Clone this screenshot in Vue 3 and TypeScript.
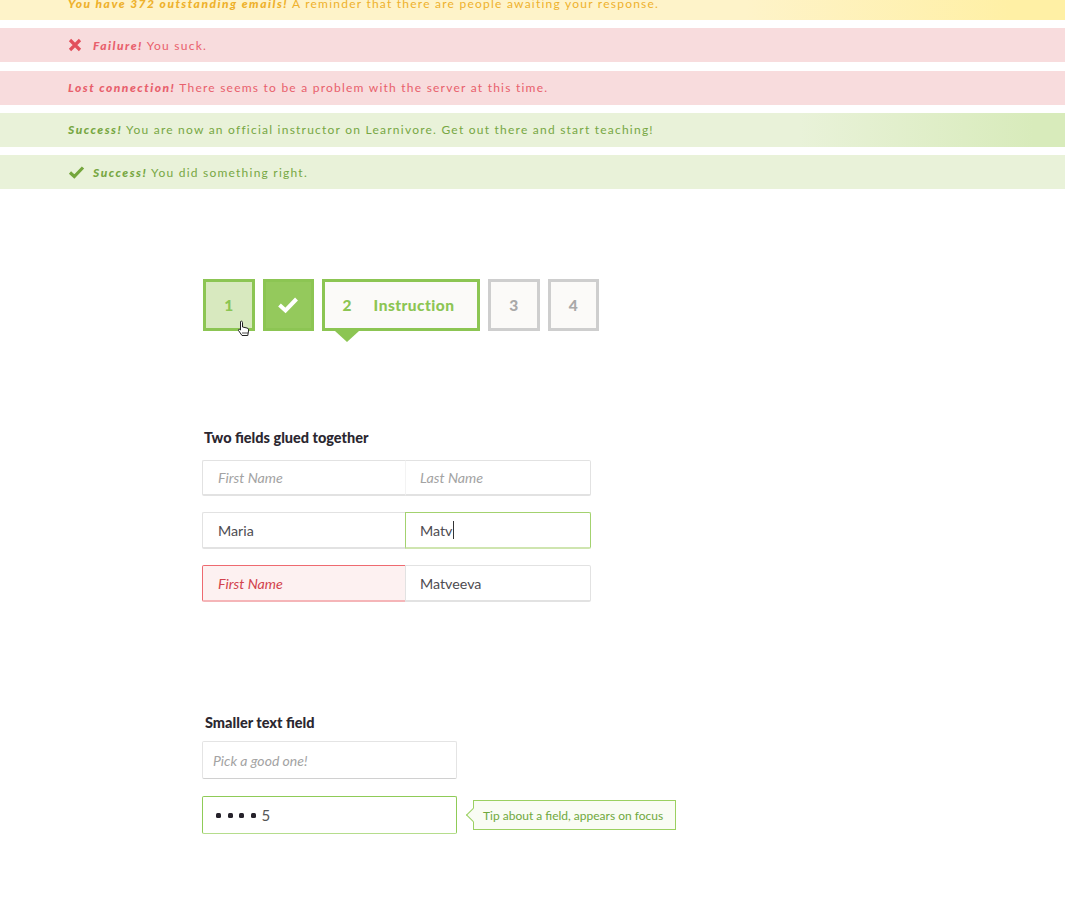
<script setup lang="ts">
const placeholder = 'First Name'
</script>

<template>
  <div class="page">
    <div class="alerts">
      <div class="alert yellow first"><span><b>You have 372 outstanding emails!</b> A reminder that there are people awaiting your response.</span></div>
      <div class="alert red">
        <svg class="ico" width="14" height="14" viewBox="0 0 14 14"><path d="M2 2 L12 12 M12 2 L2 12" stroke="#e2505c" stroke-width="3.2" fill="none"/></svg>
        <span><b>Failure!</b> You suck.</span>
      </div>
      <div class="alert red"><span><b>Lost connection!</b> There seems to be a problem with the server at this time.</span></div>
      <div class="alert green grad"><span><b>Success!</b> You are now an official instructor on Learnivore. Get out there and start teaching!</span></div>
      <div class="alert green">
        <svg class="ico check" width="17" height="14" viewBox="0 0 17 14"><path d="M2 7.5 L6.3 11.5 L15 2.5" stroke="#74a63c" stroke-width="3.2" fill="none"/></svg>
        <span><b>Success!</b> You did something right.</span>
      </div>
    </div>

    <div class="steps">
      <div class="step hover">1
        <svg class="cursor" width="13" height="17" viewBox="0 0 13 17"><path d="M3.5 1.5 C4.5 .8 5.5 1.2 5.5 2.5 V7 L10 8 C11.5 8.4 11.8 9.5 11.5 11 L10.8 15.5 H5 L1.5 10.5 C1 9.5 2 8.8 3.5 10 Z" fill="#fff" stroke="#222" stroke-width="1"/><path d="M6 12v2M8 12v2M10 12v2" stroke="#222" stroke-width=".8"/></svg>
      </div>
      <div class="step done">
        <svg width="22" height="18" viewBox="0 0 22 18"><path d="M2.5 9 L8.5 14.5 L19.5 3" stroke="#fff" stroke-width="4" fill="none"/></svg>
      </div>
      <div class="step current"><span class="num">2</span><span class="name">Instruction</span></div>
      <div class="step todo">3</div>
      <div class="step todo">4</div>
    </div>

    <section class="glued">
      <h3>Two fields glued together</h3>
      <div class="pair short">
        <div class="cell left ph">{{ placeholder }}</div>
        <div class="cell right ph blank">Last Name</div>
      </div>
      <div class="pair">
        <div class="cell left">Maria</div>
        <div class="cell right focus">Matv<i class="caret"></i></div>
      </div>
      <div class="pair">
        <div class="cell left error">{{ placeholder }}</div>
        <div class="cell right">Matveeva</div>
      </div>
    </section>

    <section class="smaller">
      <h3>Smaller text field</h3>
      <div class="small-field ph">Pick a good one!</div>
      <div class="small-row">
        <div class="small-field active"><span class="dots"><i></i><i></i><i></i><i></i></span>5</div>
        <div class="tip">Tip about a field, appears on focus</div>
      </div>
    </section>
  </div>
</template>

<style scoped>
.page { width: 1065px; height: 900px; overflow: hidden; background: #fff; font-family: Lato, "Liberation Sans", sans-serif; color: #3c3a40; }
.alerts { display: flex; flex-direction: column; gap: 8.33px; margin-top: -14px; }
.alert { height: 34px; display: flex; align-items: center; gap: 11px; padding-left: 68px; font-size: 12px; letter-spacing: 1.23px; white-space: pre-wrap; }
.alert b { font-style: italic; font-weight: 900; letter-spacing: 1.5px; }
.first { background: linear-gradient(90deg, #fef3c9 0%, #fef3c9 70%, #fff0a5 95%, #fff0a5 100%); color: #eeb12c; }
.red { background: #f8dcdd; color: #e8606c; }
.green { background: #e9f2d9; color: #77a743; }
.grad { background: linear-gradient(90deg, #e9f2d9 0%, #e9f2d9 75%, #d8ebbb 97%); }
.ico { flex: none; }
.check { margin-right: -3px; }
.steps { display: flex; gap: 8px; margin: 90px 0 0 203px; height: 52px; }
.step { position: relative; box-sizing: border-box; width: 51.5px; height: 52px; border: 3px solid #8cc553; display: flex; align-items: center; justify-content: center; font-size: 15.5px; font-weight: 900; color: #8cc553; }
.hover { background: #d8e9bf; }
.done { background: #94c95c; }
.current { width: 158px; background: #fbfaf8; gap: 22px; padding-right: 5px; }
.name { letter-spacing: 0.45px; }
.current::after { content: ""; position: absolute; left: 10px; top: 49px; border: 12px solid transparent; border-top: 11px solid #8cc553; border-bottom: 0; }
.todo { border-color: #cecece; color: #a9a9a9; background: #fbfaf8; }
.cursor { position: absolute; left: 31px; top: 38px; }
.glued { margin: 98px 0 0 202px; width: 389px; }
h3 { margin: 0 0 14px 2px; font-size: 14.5px; line-height: 17px; font-weight: 900; color: #2b2730; }
.pair { display: flex; height: 37px; margin-bottom: 16px; }
.pair.short { height: 36px; }
.cell { box-sizing: border-box; height: 100%; display: flex; align-items: center; font-size: 14.25px; border: 1px solid #e2e2e2; border-bottom-width: 2px; color: #4d4b50; }
.left { width: 204px; padding-left: 15px; border-right: 0; border-radius: 2px 0 0 2px; }
.right { width: 186px; padding-left: 14px; margin-left: -1px; position: relative; border-radius: 0 2px 2px 0; }
.ph { color: #a3a3a3; font-style: italic; }
.blank { border-left-color: #f3f3f3; }
.focus { border-color: #a3d26f; border-bottom-color: #cfe5b0; }
.caret { width: 1px; height: 18px; background: #333; margin-left: 1px; }
.error { background: #fdf1f1; color: #d2434d; font-style: italic; border: 1px solid #ee6a70; border-bottom: 2px solid #f5b5b8; }
.smaller { margin-top: 112px; margin-left: 202px; }
.smaller h3 { margin: 0 0 10px 3px; }
.small-field { box-sizing: border-box; width: 255px; height: 38px; display: flex; align-items: center; padding-left: 10px; font-size: 14px; border: 1px solid #e4e4e4; border-bottom-color: #d0d0d0; border-radius: 2px; }
.small-row { display: flex; align-items: center; gap: 16px; margin-top: 17px; }
.active { border-color: #8fcb57; border-bottom-color: #b5dd8c; padding-left: 13px; color: #555; font-size: 15px; }
.dots { display: inline-flex; gap: 6.5px; margin-right: 6px; }
.dots i { width: 5px; height: 5px; background: #26222b; border-radius: 1.5px; }
.tip { position: relative; box-sizing: border-box; width: 203px; height: 30px; display: flex; align-items: center; padding-left: 9px; font-size: 12px; color: #6fa83c; background: #f9fcf4; border: 1px solid #9bd061; white-space: nowrap; }
.tip::before { content: ""; position: absolute; left: -6px; top: 9px; width: 9px; height: 9px; background: #f9fcf4; border-left: 1px solid #9bd061; border-bottom: 1px solid #9bd061; transform: rotate(45deg); }
</style>
